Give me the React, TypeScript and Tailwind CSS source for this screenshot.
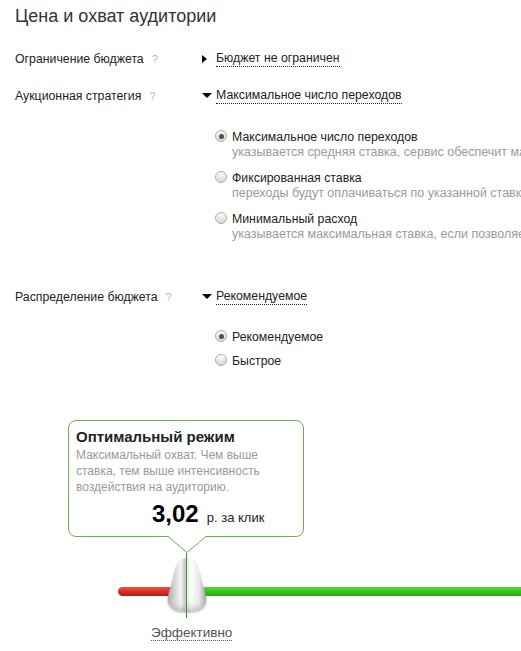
import React from 'react';

function Hint() {
  return <span className="ml-2 text-[11px] text-[#b5b5b5]">?</span>;
}

function Caret({ open }: { open: boolean }) {
  return (
    <span className="ml-px flex w-[14px] items-center">
      {open ? (
        <span className="mt-[-2px] h-0 w-0 border-x-[5px] border-t-[5px] border-x-transparent border-t-black" />
      ) : (
        <span className="h-0 w-0 border-y-[4px] border-l-[5px] border-y-transparent border-l-black" />
      )}
    </span>
  );
}

type RowProps = { label: string; value: string; open: boolean };

function Row({ label, value, open }: RowProps) {
  return (
    <div className="flex h-4 items-center text-[12.3px] leading-4">
      <div className="w-[186px] text-[#222]">
        {label}
        <Hint />
      </div>
      <Caret open={open} />
      <span className="border-b border-dotted border-[#222] leading-[15px] text-[#222]">{value}</span>
    </div>
  );
}

function Radio({ checked }: { checked?: boolean }) {
  return (
    <span className="mt-px flex h-3 w-3 shrink-0 items-center justify-center rounded-full border border-[#acacac] bg-linear-to-b from-[#fefefe] to-[#d6d6d6]">
      {checked && <span className="h-[5px] w-[5px] rounded-full bg-[#505050]" />}
    </span>
  );
}

type OptionProps = { label: string; hint?: string; checked?: boolean };

function Option({ label, hint, checked }: OptionProps) {
  return (
    <div className="flex items-start gap-[5px]">
      <Radio checked={checked} />
      <div className="whitespace-nowrap">
        <div className="text-[12.3px] leading-4 text-[#222]">{label}</div>
        {hint && <div className="text-[12.5px] leading-[15px] text-[#9a9a9a]">{hint}</div>}
      </div>
    </div>
  );
}

const knobPath =
  'M21 2 C30 2 33 13 35 23 C37 32 41 38 40 45 C39 52 31 55 21 55 C11 55 3 52 2 45 C1 38 5 32 7 23 C9 13 12 2 21 2 Z';

function Knob() {
  return (
    <svg width="42" height="58" viewBox="0 0 42 58" className="absolute left-[151px] top-[19px]">
      <defs>
        <linearGradient id="knobH" x1="0" y1="0" x2="1" y2="0">
          <stop offset="0" stopColor="#a9a9a9" />
          <stop offset="0.18" stopColor="#d4d4d4" />
          <stop offset="0.34" stopColor="#f4f4f4" />
          <stop offset="0.45" stopColor="#c4c4c4" />
          <stop offset="0.5" stopColor="#e9e9e9" />
          <stop offset="0.62" stopColor="#ffffff" />
          <stop offset="0.82" stopColor="#e6e6e6" />
          <stop offset="1" stopColor="#a2a2a2" />
        </linearGradient>
        <linearGradient id="knobV" x1="0" y1="0" x2="0" y2="1">
          <stop offset="0" stopColor="#ffffff" stopOpacity="0" />
          <stop offset="0.75" stopColor="#ffffff" stopOpacity="0" />
          <stop offset="1" stopColor="#8a8a8a" stopOpacity="0.45" />
        </linearGradient>
        <filter id="knobShadow" x="-20%" y="-10%" width="140%" height="130%">
          <feDropShadow dx="0" dy="1.5" stdDeviation="1.2" floodColor="#000" floodOpacity="0.35" />
        </filter>
      </defs>
      <path d={knobPath} fill="url(#knobH)" filter="url(#knobShadow)" />
      <path d={knobPath} fill="url(#knobV)" />
    </svg>
  );
}

export default function App() {
  return (
    <div className="h-[651px] w-[521px] overflow-hidden bg-white pl-[15px] pt-[5px] font-['Liberation_Sans',Arial,sans-serif]">
      <h1 className="text-[18px] leading-[22px] text-[#333]">Цена и охват аудитории</h1>

      <div className="mt-[24px]">
        <Row label="Ограничение бюджета" value="Бюджет не ограничен" open={false} />
      </div>
      <div className="mt-[21px]">
        <Row label="Аукционная стратегия" value="Максимальное число переходов" open />
      </div>

      <div className="ml-[200px] mt-[25px] flex flex-col gap-[10px]">
        <Option
          checked
          label="Максимальное число переходов"
          hint="указывается средняя ставка, сервис обеспечит максимальное число переходов"
        />
        <Option
          label="Фиксированная ставка"
          hint="переходы будут оплачиваться по указанной ставке, независимо от позиции"
        />
        <Option
          label="Минимальный расход"
          hint="указывается максимальная ставка, если позволяет аукцион — цена снижается"
        />
      </div>

      <div className="mt-[47px]">
        <Row label="Распределение бюджета" value="Рекомендуемое" open />
      </div>

      <div className="ml-[200px] mt-[24px] flex flex-col gap-[8px]">
        <Option checked label="Рекомендуемое" />
        <Option label="Быстрое" />
      </div>

      {/* tooltip */}
      <div className="relative ml-[53px] mt-[51px] h-[117px] w-[236px] rounded-[8px] border border-[#69b445] bg-white px-[7px] pt-[7px]">
        <div className="text-[15px] font-bold leading-[18px] text-[#222]">Оптимальный режим</div>
        <div className="mt-px text-[12px] leading-4 text-[#9a9a9a]">
          Максимальный охват. Чем выше
          <br />
          ставка, тем выше интенсивность
          <br />
          воздействия на аудиторию.
        </div>
        <div className="ml-[76px] mt-[5px] flex items-baseline gap-[8px] whitespace-nowrap">
          <span className="text-[24px] font-bold leading-7 text-black">3,02</span>
          <span className="text-[13px] text-[#222]">р. за клик</span>
        </div>
        <svg width="40" height="18" viewBox="0 0 40 18" className="absolute left-[99px] top-[115px]">
          <path d="M0 0.5 L19 16.5 L38 0.5" fill="white" stroke="#69b445" strokeWidth="1" />
          <rect x="1" y="0" width="36" height="1" fill="white" />
        </svg>
      </div>

      {/* slider */}
      <div className="relative h-[88px] pt-[50px]">
        <div className="ml-[103px] flex h-[9px] w-[420px]">
          <div className="w-[62px] rounded-l-full bg-linear-to-b from-[#f0503f] via-[#dd2e25] to-[#b01d17]" />
          <div className="flex-1 bg-linear-to-b from-[#55d936] via-[#36c41c] to-[#26a812]" />
        </div>
        <Knob />
        <div className="absolute left-[171px] top-[16px] h-[65px] w-px bg-[#2f9a1e]" />
      </div>

      <div className="ml-[136px] text-[13.5px] leading-4 text-[#555]">
        <span className="border-b border-dotted border-[#555]">Эффективно</span>
      </div>
    </div>
  );
}
